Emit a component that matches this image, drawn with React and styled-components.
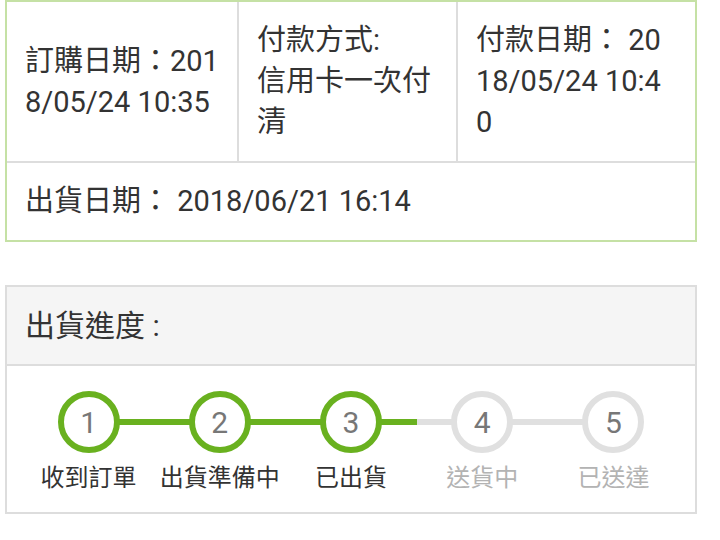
import React from 'react'
import styled, { createGlobalStyle } from 'styled-components'

const GlobalStyle = createGlobalStyle`
  body {
    margin: 0;
    background: #fff;
    font-family: Roboto, "Noto Sans CJK TC", sans-serif;
    color: #333;
  }
`

const GREEN = '#69b11f'
const GREY_LINE = '#e0e0e0'

const Page = styled.div`
  width: 692px;
  padding: 0 0 0 5px;
`

const InfoCard = styled.div`
  border: 2px solid #c5e1a5;
  font-size: 29px;
  line-height: 41px;
`

const InfoRow = styled.div`
  display: flex;
  border-top: ${p => (p.first ? 'none' : '2px solid #ddd')};
`

const Cell = styled.div`
  display: flex;
  align-items: center;
  box-sizing: border-box;
  width: ${p => p.w || 'auto'};
  flex: ${p => (p.w ? 'none' : '1')};
  padding: 18px ${p => p.pr || 18}px 18px 18px;
  border-left: ${p => (p.divider ? '2px solid #ddd' : 'none')};
  word-break: break-all;
`

const ProgressCard = styled.div`
  margin-top: 43px;
  border: 2px solid #ddd;
`

const ProgressHeader = styled.div`
  background: #f5f5f5;
  border-bottom: 2px solid #ddd;
  padding: 18px;
  font-size: 30px;
  line-height: 41px;
`

const Steps = styled.div`
  display: flex;
  padding: 25px 16px 19px;
`

const Step = styled.div`
  flex: 1;
  display: flex;
  flex-direction: column;
  align-items: center;
  position: relative;

  &::before,
  &::after {
    content: '';
    position: absolute;
    top: 28px;
    height: 6px;
    width: 50%;
  }
  &::before {
    left: 0;
    display: ${p => (p.first ? 'none' : 'block')};
    background: ${p => (p.done ? GREEN : GREY_LINE)};
  }
  &::after {
    right: 0;
    display: ${p => (p.last ? 'none' : 'block')};
    background: ${p => (p.done ? GREEN : GREY_LINE)};
  }
`

const Circle = styled.div`
  position: relative;
  z-index: 1;
  box-sizing: border-box;
  width: 62px;
  height: 62px;
  border-radius: 50%;
  border: 6px solid ${p => (p.done ? GREEN : GREY_LINE)};
  background: #fff;
  display: flex;
  align-items: center;
  justify-content: center;
  font-size: 30px;
  color: #777;
`

const StepLabel = styled.div`
  margin-top: 10px;
  font-size: 24px;
  line-height: 30px;
  color: ${p => (p.done ? '#333' : '#b3b3b3')};
  white-space: nowrap;
`

const steps = ['收到訂單', '出貨準備中', '已出貨', '送貨中', '已送達']
const current = 3

export default function App () {
  return (
    <Page lang="zh-TW">
      <GlobalStyle />
      <InfoCard>
        <InfoRow first>
          <Cell w="230px" pr={14}>訂購日期：2018/05/24 10:35</Cell>
          <Cell w="219px" divider>
            <span>
              付款方式:
              <br />
              信用卡一次付清
            </span>
          </Cell>
          <Cell divider pr={28}>付款日期： 2018/05/24 10:40</Cell>
        </InfoRow>
        <InfoRow>
          <Cell>出貨日期： 2018/06/21 16:14</Cell>
        </InfoRow>
      </InfoCard>

      <ProgressCard>
        <ProgressHeader>出貨進度 :</ProgressHeader>
        <Steps>
          {steps.map((label, i) => {
            const done = i + 1 <= current
            return (
              <Step key={label} done={done} first={i === 0} last={i === steps.length - 1}>
                <Circle done={done}>{i + 1}</Circle>
                <StepLabel done={done}>{label}</StepLabel>
              </Step>
            )
          })}
        </Steps>
      </ProgressCard>
    </Page>
  )
}
